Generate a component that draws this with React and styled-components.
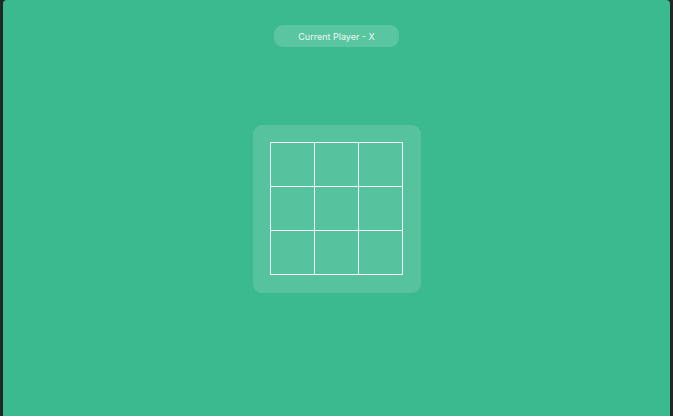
import React from "react";
import styled, { createGlobalStyle } from "styled-components";

const GlobalStyle = createGlobalStyle`
  html, body {
    margin: 0;
    padding: 0;
    background: #1f2928;
    font-family: "Inter", "Open Sans", sans-serif;
  }
`;

const Screen = styled.div`
  margin: 0 3px 0 3px;
  height: 416px;
  background: #3bba8f;
  border-radius: 4px 4px 0 0;
  display: grid;
  grid-template-rows: 1fr auto 1fr;
  justify-items: center;
`;

const Status = styled.div`
  align-self: start;
  margin-top: 25px;
  width: 125px;
  height: 22px;
  border-radius: 9px;
  background: rgba(255, 255, 255, 0.16);
  color: rgba(255, 255, 255, 0.92);
  font-size: 9px;
  display: flex;
  align-items: center;
  justify-content: center;
`;

const Panel = styled.div`
  width: 168px;
  height: 168px;
  box-sizing: border-box;
  padding: 17px;
  border-radius: 9px;
  background: rgba(255, 255, 255, 0.14);
  margin-top: 2px;
`;

const Board = styled.div`
  display: grid;
  grid-template-columns: repeat(3, 44px);
  grid-template-rows: repeat(3, 44px);
  border-top: 1px solid rgba(255, 255, 255, 0.95);
  border-left: 1px solid rgba(255, 255, 255, 0.95);
  width: fit-content;
`;

const Cell = styled.button`
  all: unset;
  border-right: 1px solid rgba(255, 255, 255, 0.95);
  border-bottom: 1px solid rgba(255, 255, 255, 0.95);
  cursor: pointer;
`;

function App() {
  const cells = Array.from({ length: 9 });
  return (
    <>
      <GlobalStyle />
      <Screen>
        <Status>Current Player - X</Status>
        <Panel>
          <Board>
            {cells.map((_, i) => (
              <Cell key={i} />
            ))}
          </Board>
        </Panel>
        <div />
      </Screen>
    </>
  );
}

export default App;
